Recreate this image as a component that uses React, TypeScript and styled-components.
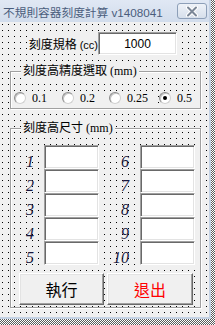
import React from "react";
import styled, { createGlobalStyle } from "styled-components";

const GlobalStyle = createGlobalStyle`
  html, body {
    margin: 0;
    padding: 0;
  }
  body {
    width: 215px;
    height: 325px;
    overflow: hidden;
    background-color: #fff;
    background-image: repeating-conic-gradient(#5a5a5a 0 25%, #fff 0 50%);
    background-size: 2px 2px;
  }
`;

const Form = styled.div`
  width: 211px;
  height: 319px;
  box-sizing: border-box;
  border-right: 2px solid #c4d2e4;
  border-bottom: 2px solid #c4d2e4;
  display: flex;
  flex-direction: column;
  font-family: "Liberation Serif", "Noto Sans CJK TC", serif;
`;

const TitleBar = styled.div`
  height: 22px;
  flex: none;
  box-sizing: border-box;
  display: flex;
  align-items: center;
  justify-content: space-between;
  padding: 0 2px 0 3px;
  background: linear-gradient(#e0e8f4, #d2ddec);
  color: #4a5d7c;
  font: 11.7px "Liberation Sans", "Noto Sans CJK TC", sans-serif;
  white-space: nowrap;
`;

const CloseBox = styled.div`
  flex: none;
  width: 30px;
  height: 16px;
  box-sizing: border-box;
  border: 1px solid #8d9fb8;
  border-radius: 3px;
  background: linear-gradient(#eef2f8, #d6dfeb);
  display: flex;
  align-items: center;
  justify-content: center;
`;

const Body = styled.div`
  flex: 1;
  background-color: #f0f0f0;
  background-image: conic-gradient(at 1px 1px, transparent 75%, #000 0);
  background-size: 6px 6px;
  background-position: 2px 2px;
  padding-top: 10px;
`;

const SpecRow = styled.div`
  display: flex;
  align-items: center;
  padding-left: 27px;
`;

const SpecLabel = styled.div`
  width: 71px;
  text-align: right;
  font-size: 12px;
  background: #f0f0f0;
  span {
    font: 11px "Liberation Sans", sans-serif;
  }
`;

const Box = styled.input<{ $w: number; $h: number }>`
  width: ${(p) => p.$w}px;
  height: ${(p) => p.$h}px;
  box-sizing: border-box;
  margin: 0;
  padding: 0;
  background: #fff;
  border: 1px solid;
  border-color: #a0a0a0 #fff #fff #a0a0a0;
  box-shadow: inset 1px 1px 0 #696969, inset -1px -1px 0 #e3e3e3;
  font: 12px "Liberation Sans", sans-serif;
  color: #000;
  text-align: center;
  outline: none;
`;

const Frame = styled.fieldset<{ $top: number }>`
  margin: ${(p) => p.$top}px 8px 0 10px;
  padding: 0;
  min-width: 0;
  border: 1px solid #a0a0a0;
  box-shadow: 1px 1px 0 #fff, inset 1px 1px 0 #fff;
`;

const Caption = styled.legend`
  margin-left: 10px;
  padding: 0 2px;
  font-size: 12px;
  line-height: 16px;
  background: #f0f0f0;
  color: #000;
`;

const RadioRow = styled.div`
  display: grid;
  grid-template-columns: 48px 47px 50px auto;
  padding: 12px 0 3px 3px;
`;

const RadioOption = styled.div`
  display: flex;
  align-items: center;
  height: 14px;
  font-size: 12px;
  gap: 6px;
  background: #f0f0f0;
  margin-right: 4px;
`;

const RadioText = styled.span`
  padding-right: 2px;
`;

const RadioCircle = styled.span<{ $checked?: boolean }>`
  display: block;
  position: relative;
  flex: 0 0 12px;
  width: 12px;
  height: 12px;
  box-sizing: border-box;
  border-radius: 50%;
  background: #fff;
  border: 1px solid;
  border-color: #8c8c8c #d0d0d0 #d0d0d0 #8c8c8c;
  box-shadow: inset 1px 1px 0 #c4c4c4;
  &::after {
    content: "";
    display: ${(p) => (p.$checked ? "block" : "none")};
    position: absolute;
    left: 3px;
    top: 3px;
    width: 4px;
    height: 4px;
    border-radius: 50%;
    background: #000;
  }
`;

const NumGrid = styled.div`
  display: grid;
  grid-template-columns: 32px 55px 41px 55px;
  grid-auto-rows: 24px;
  padding: 9px 0 0 1px;
`;

const NumLabel = styled.div<{ $pad: number }>`
  justify-self: end;
  align-self: start;
  padding-right: ${(p) => p.$pad}px;
  padding-top: 5px;
  height: 19px;
  font: italic 16px "Liberation Serif", serif;
  line-height: 24px;
  color: #16163e;
`;

const ButtonRow = styled.div`
  display: flex;
  gap: 3px;
  margin: 8px 0 2px 8px;
`;

const Button = styled.button<{ $w: number; $color: string }>`
  width: ${(p) => p.$w}px;
  height: 32px;
  box-sizing: border-box;
  margin: 0;
  padding: 0;
  background: #f0f0f0;
  border: 1px solid;
  border-color: #fff #696969 #696969 #fff;
  box-shadow: inset -1px -1px 0 #a0a0a0, inset 1px 1px 0 #e3e3e3;
  font: 16px "Noto Sans CJK TC", sans-serif;
  color: ${(p) => p.$color};
`;

const CloseIcon = () => (
  <svg width="12" height="11" viewBox="0 0 12 11">
    <path d="M2 1.5 L10 9.5 M10 1.5 L2 9.5" stroke="#fff" strokeWidth="4" strokeLinecap="round" />
    <path d="M2 1.5 L10 9.5 M10 1.5 L2 9.5" stroke="#7b8797" strokeWidth="2" strokeLinecap="round" />
  </svg>
);

const steps = ["0.1", "0.2", "0.25", "0.5"];

const App = () => {
  const rows = [0, 1, 2, 3, 4];
  return (
    <>
      <GlobalStyle />
      <Form>
        <TitleBar>
          <span>不規則容器刻度計算 v1408041</span>
          <CloseBox>
            <CloseIcon />
          </CloseBox>
        </TitleBar>
        <Body>
          <SpecRow>
            <SpecLabel>
              刻度規格 <span>(cc)</span>
            </SpecLabel>
            <Box $w={79} $h={23} defaultValue="1000" readOnly />
          </SpecRow>
          <Frame $top={8}>
            <Caption>刻度高精度選取 (mm)</Caption>
            <RadioRow>
              {steps.map((s) => (
                <RadioOption key={s}>
                  <RadioCircle $checked={s === "0.5"} />
                  <RadioText>{s}</RadioText>
                </RadioOption>
              ))}
            </RadioRow>
          </Frame>
          <Frame $top={11}>
            <Caption>刻度高尺寸 (mm)</Caption>
            <NumGrid>
              {rows.map((i) => (
                <React.Fragment key={i}>
                  <NumLabel $pad={10}>{i + 1}</NumLabel>
                  <Box $w={55} $h={24} readOnly />
                  <NumLabel $pad={11}>{i + 6}</NumLabel>
                  <Box $w={55} $h={24} readOnly />
                </React.Fragment>
              ))}
            </NumGrid>
            <ButtonRow>
              <Button $w={85} $color="#000">執行</Button>
              <Button $w={86} $color="#ff0000">退出</Button>
            </ButtonRow>
          </Frame>
        </Body>
      </Form>
    </>
  );
};

export default App;
